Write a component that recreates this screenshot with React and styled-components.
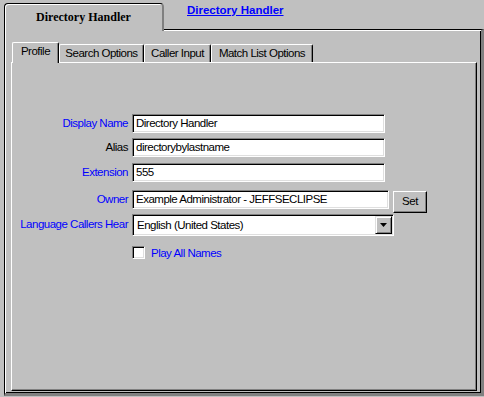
import React from "react";
import styled, { createGlobalStyle } from "styled-components";

const GlobalStyle = createGlobalStyle`
  html, body {
    margin: 0;
    padding: 0;
    background: #c0c0c0;
  }
  body {
    font-family: "Liberation Sans", Arial, sans-serif;
    font-size: 11.5px;
    letter-spacing: -0.5px;
    color: #000;
  }
`;

const Page = styled.div`
  width: 484px;
  height: 397px;
  padding: 3px 0 0 4px;
  box-sizing: border-box;
  overflow: hidden;
`;

const Header = styled.div`
  display: flex;
  align-items: flex-start;
  height: 26px;
  position: relative;
  z-index: 1;
`;

const OuterTab = styled.div`
  width: 160px;
  height: 28px;
  box-sizing: border-box;
  background: #c0c0c0;
  border-top: 1px solid #000;
  border-left: 1px solid #000;
  border-right: 2px solid #808080;
  border-radius: 4px 4px 0 0;
  box-shadow: inset 1px 1px #fff;
  padding-top: 6px;
  text-align: center;
  font-family: "Liberation Serif", "Times New Roman", serif;
  font-weight: bold;
  font-size: 12px;
  line-height: 14px;
  letter-spacing: 0;
`;

const HeaderLink = styled.a`
  margin-left: 23px;
  color: #0000ff;
  font-weight: bold;
  font-size: 11.5px;
  line-height: 14px;
  letter-spacing: 0;
  text-decoration: underline;
`;

const Frame = styled.div`
  width: 480px;
  height: 367px;
  box-sizing: border-box;
  border-top: 1px solid #000;
  border-left: 1px solid #000;
  border-right: 3px solid #808080;
  border-bottom: 3px solid #808080;
  box-shadow: inset 1px 1px #fff, inset -1px -1px #000;
  padding: 12px 0 0 6px;
`;

const TabRow = styled.div`
  display: flex;
  align-items: flex-end;
  height: 20px;
  margin-left: 1px;
`;

const InnerTab = styled.div`
  width: ${(p) => p.$width}px;
  height: ${(p) => (p.$active ? 21 : 18)}px;
  margin-bottom: ${(p) => (p.$active ? -1 : 0)}px;
  box-sizing: border-box;
  position: relative;
  z-index: ${(p) => (p.$active ? 1 : 0)};
  background: #c0c0c0;
  border-top: 1px solid #fff;
  border-left: 1px solid #fff;
  border-right: 1px solid #000;
  border-radius: 2px 2px 0 0;
  box-shadow: inset -1px 0 #808080;
  text-align: center;
  line-height: ${(p) => (p.$active ? 17 : 16)}px;
  white-space: nowrap;
`;

const Panel = styled.div`
  width: 466px;
  height: 329px;
  box-sizing: border-box;
  border-top: 1px solid #fff;
  border-left: 1px solid #fff;
  border-right: 1px solid #000;
  border-bottom: 1px solid #000;
  box-shadow: inset -1px -1px #808080;
  padding-top: 51px;
`;

const Form = styled.div`
  display: flex;
  flex-direction: column;
`;

const Row = styled.div`
  display: flex;
  align-items: flex-start;
  gap: 4px;
  margin-top: ${(p) => p.$top || 0}px;
`;

const Label = styled.div`
  width: 116px;
  text-align: right;
  white-space: nowrap;
  color: ${(p) => (p.$blue ? "#0000ff" : "#000")};
  line-height: ${(p) => p.$h || 19}px;
`;

const sunken = `
  box-sizing: border-box;
  background: #fff;
  border: 1px solid;
  border-color: #808080 #fff #fff #808080;
  box-shadow: inset 1px 1px #000, inset -1px -1px #dfdfdf;
`;

const TextBox = styled.div`
  ${sunken}
  width: ${(p) => p.$width}px;
  height: 19px;
  padding-left: 3px;
  padding-top: 1px;
  line-height: 15px;
  white-space: nowrap;
  overflow: hidden;
`;

const Button = styled.div`
  width: 34px;
  height: 22px;
  margin-top: 1px;
  box-sizing: border-box;
  border: 1px solid;
  border-color: #fff #000 #000 #fff;
  box-shadow: inset -1px -1px #808080;
  text-align: center;
  line-height: 19px;
`;

const Select = styled.div`
  ${sunken}
  width: 262px;
  height: 22px;
  display: flex;
  align-items: stretch;
  justify-content: space-between;
  padding: 1px 1px 1px 4px;
`;

const SelectText = styled.span`
  line-height: 18px;
  white-space: nowrap;
`;

const DropButton = styled.div`
  width: 17px;
  box-sizing: border-box;
  background: #c0c0c0;
  border: 1px solid;
  border-color: #dfdfdf #000 #000 #dfdfdf;
  box-shadow: inset 1px 1px #fff, inset -1px -1px #808080;
  display: flex;
  align-items: center;
  justify-content: center;
`;

const CheckRow = styled.div`
  display: flex;
  align-items: center;
  gap: 6px;
  margin: 10px 0 0 120px;
`;

const CheckBox = styled.div`
  ${sunken}
  width: 13px;
  height: 13px;
`;

const CheckLabel = styled.span`
  color: #0000ff;
`;

const ArrowDown = () => (
  <svg width="7" height="4" viewBox="0 0 7 4">
    <path d="M0 0h7L3.5 4z" fill="#000" />
  </svg>
);

const tabs = [
  { label: "Profile", width: 47, active: true },
  { label: "Search Options", width: 85 },
  { label: "Caller Input", width: 67 },
  { label: "Match List Options", width: 102 },
];

export default function App() {
  return (
    <>
      <GlobalStyle />
      <Page>
        <Header>
          <OuterTab>Directory Handler</OuterTab>
          <HeaderLink>Directory Handler</HeaderLink>
        </Header>
        <Frame>
          <TabRow>
            {tabs.map((t) => (
              <InnerTab key={t.label} $width={t.width} $active={t.active}>
                {t.label}
              </InnerTab>
            ))}
          </TabRow>
          <Panel>
            <Form>
              <Row>
                <Label $blue>Display Name</Label>
                <TextBox $width={253}>Directory Handler</TextBox>
              </Row>
              <Row $top={5}>
                <Label>Alias</Label>
                <TextBox $width={253}>directorybylastname</TextBox>
              </Row>
              <Row $top={6}>
                <Label $blue>Extension</Label>
                <TextBox $width={253}>555</TextBox>
              </Row>
              <Row $top={8}>
                <Label $blue>Owner</Label>
                <TextBox $width={257}>Example Administrator - JEFFSECLIPSE</TextBox>
                <Button>Set</Button>
              </Row>
              <Row $top={1}>
                <Label $blue $h={21}>Language Callers Hear</Label>
                <Select>
                  <SelectText>English (United States)</SelectText>
                  <DropButton>
                    <ArrowDown />
                  </DropButton>
                </Select>
              </Row>
              <CheckRow>
                <CheckBox />
                <CheckLabel>Play All Names</CheckLabel>
              </CheckRow>
            </Form>
          </Panel>
        </Frame>
      </Page>
    </>
  );
}
